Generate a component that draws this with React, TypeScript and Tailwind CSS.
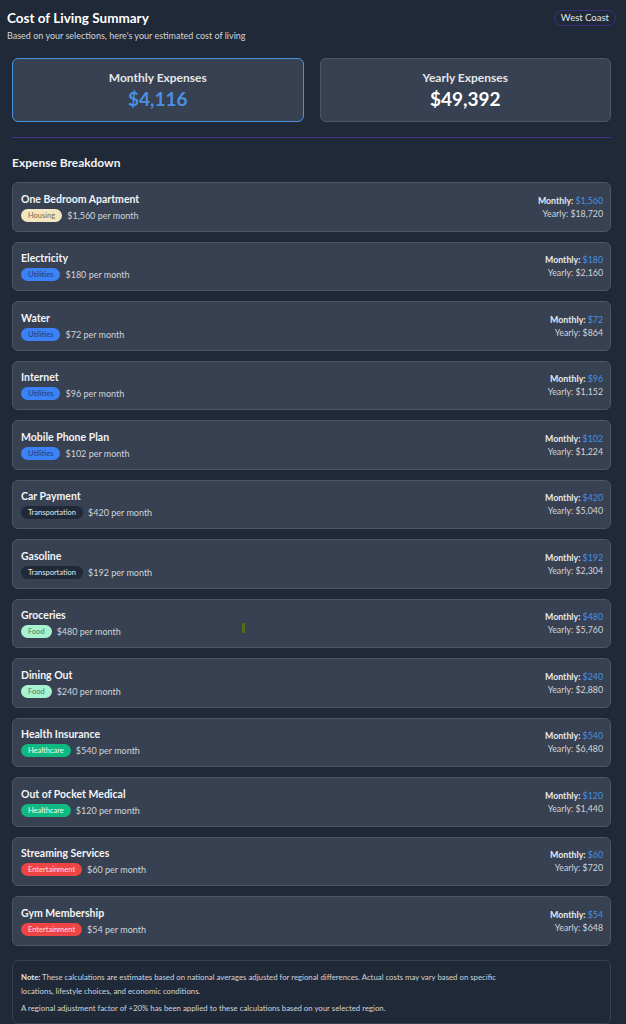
import React from 'react';

type Category = 'Housing' | 'Utilities' | 'Transportation' | 'Food' | 'Healthcare' | 'Entertainment';

interface Expense {
  name: string;
  category: Category;
  monthly: number;
}

const badgeStyles: Record<Category, string> = {
  Housing: 'bg-[#f3e5c0] text-[#7a6a4a]',
  Utilities: 'bg-[#3b82f6] text-[#1e3a8a]',
  Transportation: 'bg-[#1f2937] text-[#e5e7eb]',
  Food: 'bg-[#a7f3d0] text-[#4b7a62]',
  Healthcare: 'bg-[#10b981] text-[#ecfdf5]',
  Entertainment: 'bg-[#ef4444] text-[#fee2e2]'
};

const expenses: Expense[] = [
  { name: 'One Bedroom Apartment', category: 'Housing', monthly: 1560 },
  { name: 'Electricity', category: 'Utilities', monthly: 180 },
  { name: 'Water', category: 'Utilities', monthly: 72 },
  { name: 'Internet', category: 'Utilities', monthly: 96 },
  { name: 'Mobile Phone Plan', category: 'Utilities', monthly: 102 },
  { name: 'Car Payment', category: 'Transportation', monthly: 420 },
  { name: 'Gasoline', category: 'Transportation', monthly: 192 },
  { name: 'Groceries', category: 'Food', monthly: 480 },
  { name: 'Dining Out', category: 'Food', monthly: 240 },
  { name: 'Health Insurance', category: 'Healthcare', monthly: 540 },
  { name: 'Out of Pocket Medical', category: 'Healthcare', monthly: 120 },
  { name: 'Streaming Services', category: 'Entertainment', monthly: 60 },
  { name: 'Gym Membership', category: 'Entertainment', monthly: 54 }
];

const fmt = (n: number) => '$' + n.toLocaleString('en-US');

const ExpenseRow: React.FC<{ item: Expense }> = ({ item }) => (
  <div className="relative h-[49.5px] rounded-md border border-[#4b5563] bg-[#374151] pl-[8px] pr-[7px] flex items-center justify-between">
    <div className="flex flex-col">
      <div className="text-[10.5px] leading-[14px] font-bold text-[#f3f4f6]">{item.name}</div>
      <div className="mt-[3px] flex items-center gap-[5px]">
        <span className={`rounded-full px-[7px] h-[13px] flex items-center text-[7.5px] ${badgeStyles[item.category]}`}>
          {item.category}
        </span>
        <span className="text-[9px] text-[#d1d5db]">{fmt(item.monthly)} per month</span>
      </div>
    </div>
    <div className="flex flex-col items-end text-[8.8px] leading-[13px]">
      <div className="font-bold text-[#e5e7eb]">
        Monthly: <span className="font-normal text-[#4a90e2]">{fmt(item.monthly)}</span>
      </div>
      <div className="text-[#d1d5db]">Yearly: {fmt(item.monthly * 12)}</div>
    </div>
    {item.name === 'Groceries' && (
      <div className="absolute left-[229px] top-[23px] w-[3px] h-[10px] bg-[#5a6b16]" />
    )}
  </div>
);

export default function App() {
  const monthly = expenses.reduce((s, e) => s + e.monthly, 0);

  return (
    <div className="min-h-screen bg-[#1f2937] text-white" style={{ fontFamily: 'Lato, "Open Sans", sans-serif' }}>
      <div className="pl-[7px] pr-[10px] pt-[8px] flex items-start justify-between">
        <div>
          <h1 className="text-[13.5px] leading-[20px] font-bold text-white">Cost of Living Summary</h1>
          <p className="mt-[2px] text-[9px] leading-[12px] text-[#d1d5db]">
            Based on your selections, here's your estimated cost of living
          </p>
        </div>
        <span className="mt-[2px] rounded-full border-[1.5px] border-[#3f2c86] px-[6px] h-[16px] flex items-center text-[9.5px] text-[#e5e7eb]">
          West Coast
        </span>
      </div>

      <div className="pl-3 pr-[15px]">
        <div className="mt-[16px] grid grid-cols-2 gap-4">
          <div className="h-[64px] rounded-md border border-[#4a90e2] bg-[#374151] flex flex-col items-center justify-center">
            <div className="text-[12px] leading-[14px] font-bold text-[#e5e7eb]">Monthly Expenses</div>
            <div className="mt-[3px] text-[19px] leading-[22px] font-bold text-[#4a90e2]">{fmt(monthly)}</div>
          </div>
          <div className="h-[64px] rounded-md border border-[#4b5563] bg-[#374151] flex flex-col items-center justify-center">
            <div className="text-[12px] leading-[14px] font-bold text-[#e5e7eb]">Yearly Expenses</div>
            <div className="mt-[3px] text-[19px] leading-[22px] font-bold text-white">{fmt(monthly * 12)}</div>
          </div>
        </div>

        <div className="mt-[15px] h-px bg-[#44318a]" />

        <h2 className="mt-[17px] text-[12px] leading-[16px] font-bold text-[#f3f4f6]">Expense Breakdown</h2>

        <div className="mt-[11px] flex flex-col gap-[10px]">
          {expenses.map((e) => (
            <ExpenseRow key={e.name} item={e} />
          ))}
        </div>

        <div className="mt-[14.5px] rounded-md border border-[#374151] bg-[#1f2937] px-[8px] pt-[9px] pb-[8px] text-[7.8px] leading-[14px] text-[#d1d5db]">
          <p>
            <span className="font-bold text-[#e5e7eb]">Note:</span>{' '}
            These calculations are estimates based on national averages adjusted for regional differences. Actual costs may vary based on specific
            <br />
            locations, lifestyle choices, and economic conditions.
          </p>
          <p className="mt-[3px]">
            A regional adjustment factor of +20% has been applied to these calculations based on your selected region.
          </p>
        </div>
      </div>
    </div>
  );
}
